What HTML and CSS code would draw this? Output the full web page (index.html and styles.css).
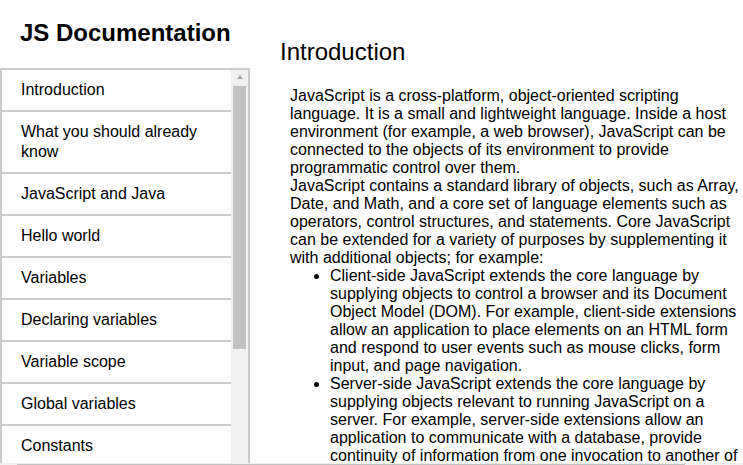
FILE: index.html
```html
<!DOCTYPE html>
<html lang="en">
<head>
<meta charset="utf-8">
<title>JS Documentation</title>
<link rel="stylesheet" href="styles.css">
</head>
<body>
<nav class="navbar" id="navbar">
  <header class="nav-title">JS Documentation</header>
  <div class="nav-box">
    <ul class="nav-list">
      <li><a class="nav-link" href="#Introduction">Introduction</a></li>
      <li><a class="nav-link" href="#What_you_should_already_know">What you should already know</a></li>
      <li><a class="nav-link" href="#JavaScript_and_Java">JavaScript and Java</a></li>
      <li><a class="nav-link" href="#Hello_world">Hello world</a></li>
      <li><a class="nav-link" href="#Variables">Variables</a></li>
      <li><a class="nav-link" href="#Declaring_variables">Declaring variables</a></li>
      <li><a class="nav-link" href="#Variable_scope">Variable scope</a></li>
      <li><a class="nav-link" href="#Global_variables">Global variables</a></li>
      <li><a class="nav-link" href="#Constants">Constants</a></li>
      <li><a class="nav-link" href="#Data_types">Data types</a></li>
      <li><a class="nav-link" href="#if...else_statement">if...else statement</a></li>
    </ul>
    <div class="vscroll" aria-hidden="true">
      <div class="vscroll-up"><span class="vscroll-arrow"></span></div>
      <div class="vscroll-thumb"></div>
    </div>
  </div>
</nav>
<main class="main-doc" id="main-doc">
  <section class="main-section" id="Introduction">
    <header class="section-title">Introduction</header>
    <article class="section-body">
      <p class="text">JavaScript is a cross-platform, object-oriented scripting language. It is a small and lightweight language. Inside a host environment (for example, a web browser), JavaScript can be connected to the objects of its environment to provide programmatic control over them.</p>
      <p class="text">JavaScript contains a standard library of objects, such as Array, Date, and Math, and a core set of language elements such as operators, control structures, and statements. Core JavaScript can be extended for a variety of purposes by supplementing it with additional objects; for example:</p>
      <ul class="bullets">
        <li>Client-side JavaScript extends the core language by supplying objects to control a browser and its Document Object Model (DOM). For example, client-side extensions allow an application to place elements on an HTML form and respond to user events such as mouse clicks, form input, and page navigation.</li>
        <li>Server-side JavaScript extends the core language by supplying objects relevant to running JavaScript on a server. For example, server-side extensions allow an application to communicate with a database, provide continuity of information from one invocation to another of the application, or perform file manipulations on a server.</li>
      </ul>
    </article>
  </section>
</main>
<div class="hscroll" aria-hidden="true"><div class="hscroll-thumb"></div></div>
</body>
</html>
```
FILE: styles.css
```css
html, body {
  margin: 0;
  padding: 0;
  height: 100%;
  overflow: hidden;
}
body {
  font-family: "Liberation Sans", Arial, sans-serif;
  font-size: 16px;
  color: #000;
  background: #fff;
  display: flex;
  flex-direction: row;
  align-items: flex-start;
}
.navbar {
  width: 250px;
  flex-shrink: 0;
  height: 100vh;
  display: flex;
  flex-direction: column;
}
.nav-title {
  font-size: 24px;
  font-weight: bold;
  line-height: normal;
  margin: 19px 0 21px 20px;
  color: #000;
}
.nav-box {
  flex: 1;
  display: flex;
  flex-direction: row;
  border: 2px solid #cccccc;
  border-bottom: none;
  overflow: hidden;
}
.nav-list {
  flex: 1;
  list-style: none;
  margin: 0;
  padding: 0;
}
.nav-list li {
  border-bottom: 2px solid #cccccc;
}
.nav-link {
  display: block;
  padding: 10px 19px 10px 19px;
  line-height: 20px;
  color: #000;
  text-decoration: none;
}
.vscroll {
  width: 17px;
  flex-shrink: 0;
  background: #f1f1f1;
  display: flex;
  flex-direction: column;
  align-items: center;
}
.vscroll-up {
  height: 16px;
  width: 17px;
  display: flex;
  justify-content: center;
  padding-top: 5px;
  box-sizing: border-box;
}
.vscroll-arrow {
  width: 0;
  height: 0;
  border-left: 3.5px solid transparent;
  border-right: 3.5px solid transparent;
  border-bottom: 4px solid #a3a3a3;
}
.vscroll-thumb {
  width: 13px;
  height: 263px;
  background: #c1c1c1;
}
.main-doc {
  margin-left: 30px;
  width: 466px;
  flex-shrink: 0;
  padding-top: 38px;
}
.section-title {
  font-size: 24px;
  font-weight: normal;
  line-height: normal;
  margin: 0 0 21px 0;
}
.section-body {
  padding-left: 10px;
  line-height: normal;
}
.text {
  margin: 0;
}
.bullets {
  margin: 0;
  padding-left: 40px;
}
.hscroll {
  position: fixed;
  left: 0;
  right: 0;
  bottom: 0;
  height: 2px;
  background: #f1f1f1;
}
.hscroll-thumb {
  margin-left: 17px;
  margin-top: 1px;
  width: 668px;
  height: 1px;
  background: #c1c1c1;
}
```
